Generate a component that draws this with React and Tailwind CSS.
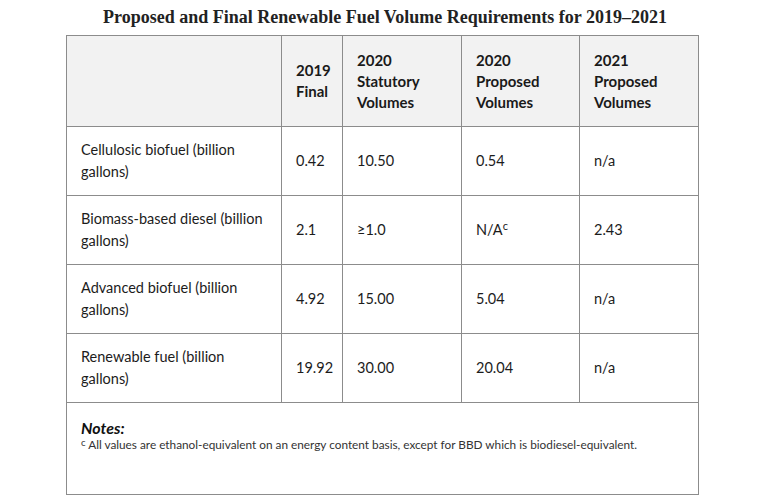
import React from 'react';

const rows = [
  { label: ['Cellulosic biofuel (billion', 'gallons)'], v: ['0.42', '10.50', '0.54', 'n/a'] },
  { label: ['Biomass-based diesel (billion', 'gallons)'], v: ['2.1', '≥1.0', 'NA', '2.43'] },
  { label: ['Advanced biofuel (billion', 'gallons)'], v: ['4.92', '15.00', '5.04', 'n/a'] },
  { label: ['Renewable fuel (billion', 'gallons)'], v: ['19.92', '30.00', '20.04', 'n/a'] },
];

export default function App() {
  return (
    <div className="w-[770px] h-[500px] bg-white overflow-hidden text-[#1c1c1c]" style={{ fontFamily: 'Lato, "Noto Sans", sans-serif' }}>
      <h1 className="h-[35px] pt-[6px] text-center text-[18px] font-bold text-[#222] leading-[22px]" style={{ fontFamily: '"Liberation Serif", serif' }}>
        Proposed and Final Renewable Fuel Volume Requirements for 2019–2021
      </h1>
      <table className="ml-[66px] w-[632px] table-fixed border-collapse text-[14.5px] leading-[22px]">
        <colgroup>
          <col className="w-[215px]" />
          <col className="w-[61px]" />
          <col className="w-[119px]" />
          <col className="w-[118px]" />
          <col className="w-[119px]" />
        </colgroup>
        <thead>
          <tr className="h-[91px] bg-[#f2f2f2] font-bold text-[15px] leading-[21px] text-[#1a1a1a]">
            <th className="border border-[#8c8c8c]"></th>
            <th className="border border-[#8c8c8c] px-[14px] text-left align-middle">2019<br />Final</th>
            <th className="border border-[#8c8c8c] px-[14px] text-left align-middle">2020<br />Statutory<br />Volumes</th>
            <th className="border border-[#8c8c8c] px-[14px] text-left align-middle">2020<br />Proposed<br />Volumes</th>
            <th className="border border-[#8c8c8c] px-[14px] text-left align-middle">2021<br />Proposed<br />Volumes</th>
          </tr>
        </thead>
        <tbody>
          {rows.map((r, i) => (
            <tr key={i} className="h-[69px]">
              <td className="border border-[#8c8c8c] px-[14px] align-middle">{r.label[0]}<br />{r.label[1]}</td>
              {r.v.map((v, j) => (
                <td key={j} className="border border-[#8c8c8c] px-[14px] align-middle">
                  {v === 'NA' ? (<span>N/A<sup className="text-[11px] leading-none">c</sup></span>) : v}
                </td>
              ))}
            </tr>
          ))}
          <tr className="h-[92px]">
            <td colSpan={5} className="border border-[#8c8c8c] px-[14px] pt-[17px] align-top">
              <div className="font-bold italic text-[16px] leading-[16px] text-[#111]">Notes:</div>
              <div className="mt-[2px] text-[11.8px] leading-[14px] text-[#333]">
                <span className="align-top text-[9.5px] leading-[10px]">c</span> All values are ethanol-equivalent on an energy content basis, except for BBD which is biodiesel-equivalent.
              </div>
            </td>
          </tr>
        </tbody>
      </table>
    </div>
  );
}
